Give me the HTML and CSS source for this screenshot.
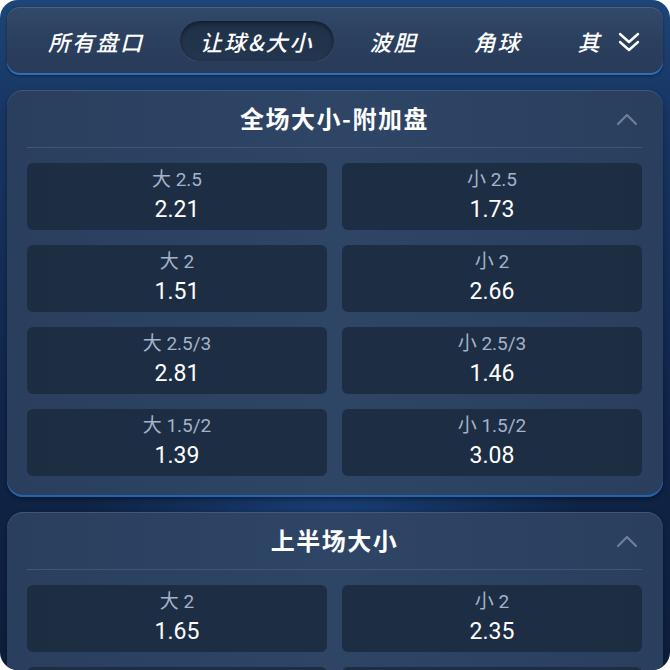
FILE: index.html
```html
<!DOCTYPE html>
<html lang="zh-CN">
<head>
<meta charset="utf-8">
<title>盘口</title>
<link rel="stylesheet" href="styles.css">
</head>
<body>
<div class="app">
  <div class="tabbar">
    <div class="tabs">
      <div class="tab">所有盘口</div>
      <div class="tab active">让球&amp;大小</div>
      <div class="tab">波胆</div>
      <div class="tab">角球</div>
      <div class="tab">其</div>
    </div>
    <div class="more">
      <svg width="24" height="22" viewBox="0 0 24 22"><path d="M3 3 L12 11 L21 3 M3 11 L12 19 L21 11" fill="none" stroke="#fff" stroke-width="2.4" stroke-linecap="round" stroke-linejoin="round"/></svg>
    </div>
  </div>

  <div class="card">
    <div class="card-head">
      <div class="title">全场大小-附加盘</div>
      <svg class="chev" width="22" height="14" viewBox="0 0 22 14"><path d="M2 12 L11 3 L20 12" fill="none" stroke="#6e8099" stroke-width="2.2" stroke-linecap="round" stroke-linejoin="round"/></svg>
    </div>
    <div class="grid">
      <div class="cell"><div class="lbl">大 2.5</div><div class="val">2.21</div></div>
      <div class="cell"><div class="lbl">小 2.5</div><div class="val">1.73</div></div>
      <div class="cell"><div class="lbl">大 2</div><div class="val">1.51</div></div>
      <div class="cell"><div class="lbl">小 2</div><div class="val">2.66</div></div>
      <div class="cell"><div class="lbl">大 2.5/3</div><div class="val">2.81</div></div>
      <div class="cell"><div class="lbl">小 2.5/3</div><div class="val">1.46</div></div>
      <div class="cell"><div class="lbl">大 1.5/2</div><div class="val">1.39</div></div>
      <div class="cell"><div class="lbl">小 1.5/2</div><div class="val">3.08</div></div>
    </div>
  </div>

  <div class="card">
    <div class="card-head">
      <div class="title">上半场大小</div>
      <svg class="chev" width="22" height="14" viewBox="0 0 22 14"><path d="M2 12 L11 3 L20 12" fill="none" stroke="#6e8099" stroke-width="2.2" stroke-linecap="round" stroke-linejoin="round"/></svg>
    </div>
    <div class="grid">
      <div class="cell"><div class="lbl">大 2</div><div class="val">1.65</div></div>
      <div class="cell"><div class="lbl">小 2</div><div class="val">2.35</div></div>
      <div class="cell empty"></div>
      <div class="cell empty"></div>
    </div>
  </div>
</div>
</body>
</html>
```

FILE: styles.css
```css
html, body {
  margin: 0;
  padding: 0;
  background: #ffffff;
}
body {
  font-family: "Noto Sans CJK SC", "Noto Sans", sans-serif;
}
.app {
  width: 670px;
  height: 670px;
  box-sizing: border-box;
  border-radius: 18px;
  overflow: hidden;
  padding: 7px;
  background:
    radial-gradient(ellipse 360px 60px at 335px 505px, rgba(40,110,200,0.35), rgba(0,0,0,0) 70%),
    linear-gradient(180deg, #1d4577 0%, #173563 18%, #10254a 60%, #0d1e3b 100%);
  display: flex;
  flex-direction: column;
  gap: 15px;
}
.tabbar {
  flex: none;
  height: 68px;
  box-sizing: border-box;
  border-radius: 13px;
  background: linear-gradient(180deg, #34496a 0%, #2b3f5e 50%, #283b59 100%);
  box-shadow: inset 0 1px 0 rgba(255,255,255,0.12), inset 0 -2px 0 #2a6fc0, 0 1px 3px rgba(0,0,0,0.4);
  display: flex;
  align-items: center;
  padding: 0 22px 0 21px;
}
.tabs {
  flex: none;
  width: 575px;
  overflow: hidden;
  display: flex;
  align-items: center;
  gap: 16px;
  white-space: nowrap;
}
.tab {
  flex: none;
  padding: 0 20px;
  height: 40px;
  line-height: 40px;
  font-size: 22px;
  font-style: italic;
  font-weight: 500;
  color: #ffffff;
  letter-spacing: 2px;
}
.tab.active {
  border-radius: 20px;
  background: linear-gradient(180deg, #1f3048 0%, #26395358 100%), #23354e;
  box-shadow: inset 0 2px 4px rgba(0,0,0,0.45), 0 1px 0 rgba(255,255,255,0.08);
}
.more {
  flex: 1;
  display: flex;
  justify-content: flex-end;
  align-items: center;
  padding-top: 2px;
}
.card {
  flex: none;
  border-radius: 16px;
  background: linear-gradient(90deg, #2a3f5e 0%, #2e4566 50%, #2a3f5e 100%);
  box-shadow: inset 0 1px 0 rgba(255,255,255,0.12), inset 0 -2px 0 #2464b0, 0 2px 4px rgba(0,0,0,0.35);
  padding: 0 21px 21px 20px;
}
.card-head {
  height: 57px;
  border-bottom: 1px solid #3f5676;
  display: flex;
  align-items: center;
  justify-content: center;
  position: relative;
}
.title {
  font-size: 24px;
  font-weight: 700;
  color: #ffffff;
  letter-spacing: 1.5px;
  margin-top: -2px;
}
.chev {
  position: absolute;
  right: 4px;
  top: 22px;
}
.grid {
  margin-top: 15px;
  display: grid;
  grid-template-columns: 1fr 1fr;
  gap: 15px;
}
.cell {
  height: 67px;
  border-radius: 6px;
  background: rgba(24, 37, 56, 0.72);
  display: flex;
  flex-direction: column;
  align-items: center;
  justify-content: center;
  gap: 3px;
  font-family: "Roboto", "Noto Sans CJK SC", sans-serif;
}
.lbl {
  font-size: 19px;
  line-height: 24px;
  color: #a3b3ca;
}
.val {
  font-size: 23px;
  line-height: 30px;
  font-weight: 400;
  color: #ffffff;
}
```
